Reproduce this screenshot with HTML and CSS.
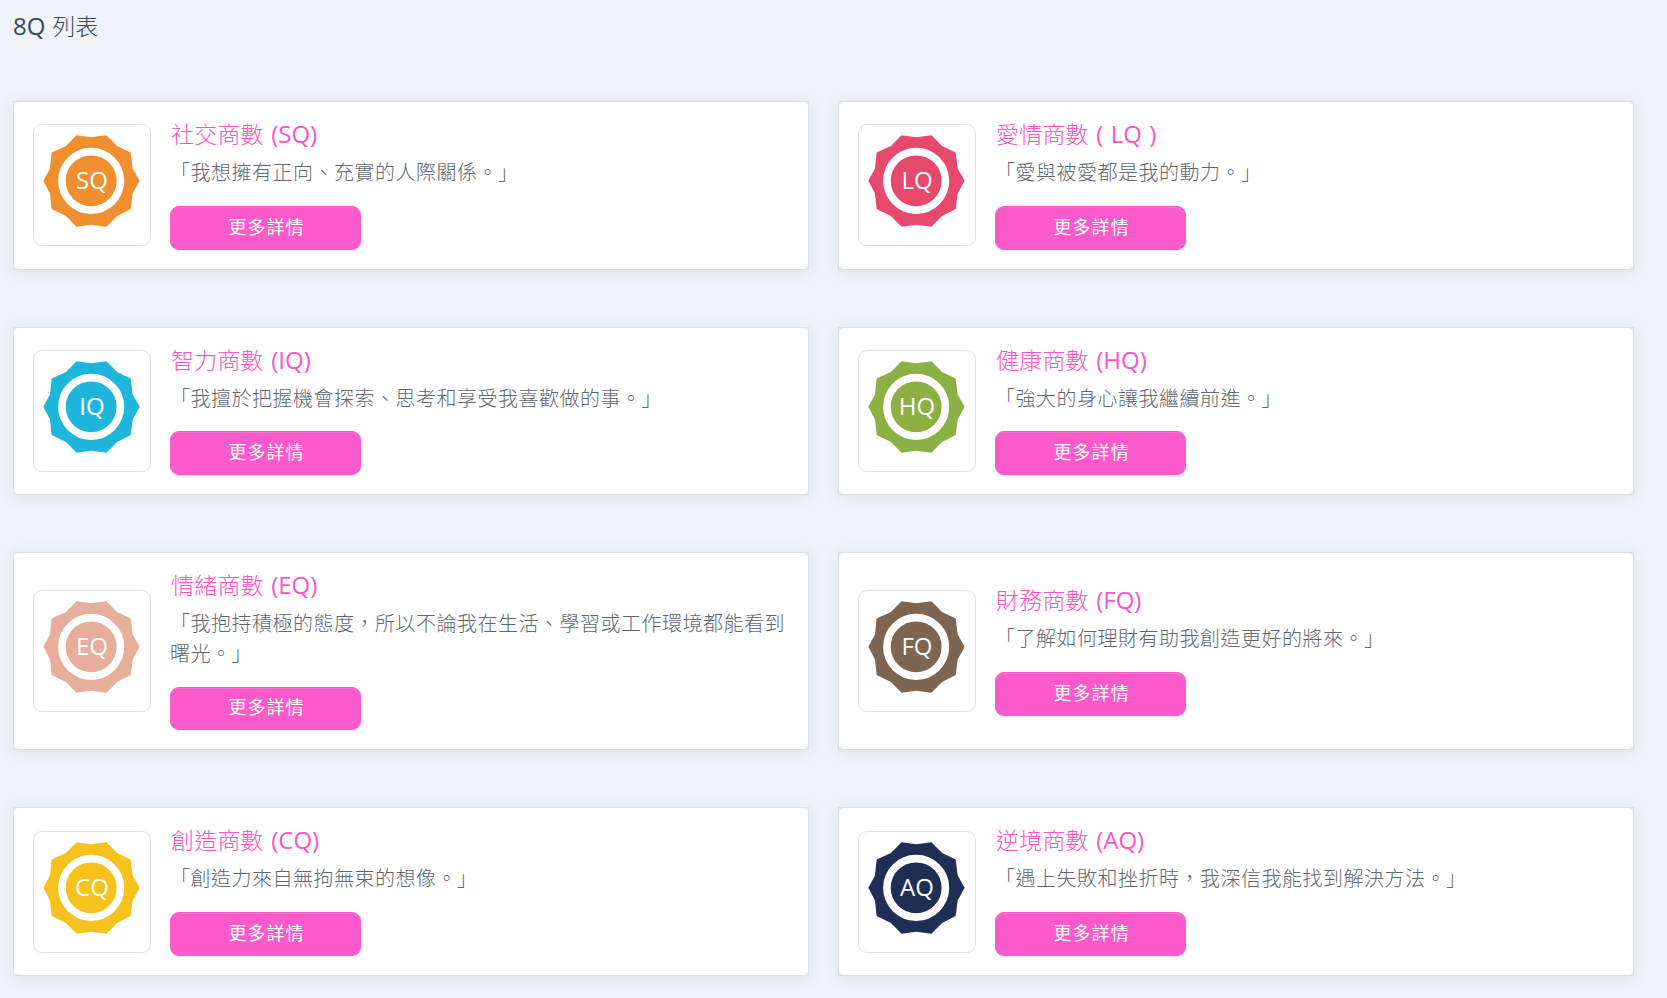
FILE: index.html
```
<!DOCTYPE html>
<html lang="zh-Hant">
<head>
  <meta charset="UTF-8">
  <title>8Q 列表</title>
  <meta name="viewport" content="width=device-width, initial-scale=1.0">
  <link rel="stylesheet" href="styles.css">
</head>
<body>

  <!-- badge shape, reused by every card -->
  <svg class="defs" width="0" height="0">
    <symbol id="badge" viewBox="129 134 292 277">
      <path fill="currentColor" d="M230 135L274 141L320 135L352 167L393 187L399 235L420 272L399 310L393 357L352 378L320 410L274 404L230 410L198 378L155 357L150 310L130 272L150 235L155 187L198 167Z"/>
      <circle cx="274" cy="272" r="88" fill="none" stroke="#fff" stroke-width="23"/>
    </symbol>
  </svg>

  <h1 class="page-title"><span class="latin">8Q</span> 列表</h1>

  <div class="list">

    <div class="card">
      <div class="card-inner">
        <div class="thumb sq"><svg class="badge"><use href="#badge"/></svg><span class="badge-text">SQ</span></div>
        <div class="content">
          <h2 class="title">社交商數 <span class="latin">(SQ)</span></h2>
          <p class="desc">「我想擁有正向、充實的人際關係。」</p>
          <button class="btn">更多詳情</button>
        </div>
      </div>
    </div>

    <div class="card">
      <div class="card-inner">
        <div class="thumb lq"><svg class="badge"><use href="#badge"/></svg><span class="badge-text">LQ</span></div>
        <div class="content">
          <h2 class="title">愛情商數 <span class="latin">( LQ )</span></h2>
          <p class="desc">「愛與被愛都是我的動力。」</p>
          <button class="btn">更多詳情</button>
        </div>
      </div>
    </div>

    <div class="card">
      <div class="card-inner">
        <div class="thumb iq"><svg class="badge"><use href="#badge"/></svg><span class="badge-text">IQ</span></div>
        <div class="content">
          <h2 class="title">智力商數 <span class="latin">(IQ)</span></h2>
          <p class="desc">「我擅於把握機會探索、思考和享受我喜歡做的事。」</p>
          <button class="btn">更多詳情</button>
        </div>
      </div>
    </div>

    <div class="card">
      <div class="card-inner">
        <div class="thumb hq"><svg class="badge"><use href="#badge"/></svg><span class="badge-text">HQ</span></div>
        <div class="content">
          <h2 class="title">健康商數 <span class="latin">(HQ)</span></h2>
          <p class="desc">「強大的身心讓我繼續前進。」</p>
          <button class="btn">更多詳情</button>
        </div>
      </div>
    </div>

    <div class="card">
      <div class="card-inner">
        <div class="thumb eq"><svg class="badge"><use href="#badge"/></svg><span class="badge-text">EQ</span></div>
        <div class="content">
          <h2 class="title">情緒商數 <span class="latin">(EQ)</span></h2>
          <p class="desc">「我抱持積極的態度，所以不論我在生活、學習或工作環境都能看到曙光。」</p>
          <button class="btn">更多詳情</button>
        </div>
      </div>
    </div>

    <div class="card">
      <div class="card-inner">
        <div class="thumb fq"><svg class="badge"><use href="#badge"/></svg><span class="badge-text">FQ</span></div>
        <div class="content">
          <h2 class="title">財務商數 <span class="latin">(FQ)</span></h2>
          <p class="desc">「了解如何理財有助我創造更好的將來。」</p>
          <button class="btn">更多詳情</button>
        </div>
      </div>
    </div>

    <div class="card">
      <div class="card-inner">
        <div class="thumb cq"><svg class="badge"><use href="#badge"/></svg><span class="badge-text">CQ</span></div>
        <div class="content">
          <h2 class="title">創造商數 <span class="latin">(CQ)</span></h2>
          <p class="desc">「創造力來自無拘無束的想像。」</p>
          <button class="btn">更多詳情</button>
        </div>
      </div>
    </div>

    <div class="card">
      <div class="card-inner">
        <div class="thumb aq"><svg class="badge"><use href="#badge"/></svg><span class="badge-text">AQ</span></div>
        <div class="content">
          <h2 class="title">逆境商數 <span class="latin">(AQ)</span></h2>
          <p class="desc">「遇上失敗和挫折時，我深信我能找到解決方法。」</p>
          <button class="btn">更多詳情</button>
        </div>
      </div>
    </div>

  </div>

</body>
</html>
```
FILE: styles.css
```
* {
  box-sizing: border-box;
}

body {
  margin: 0;
  min-height: 100vh;
  padding: 13px 33px 0 13px;
  background-color: #f0f4f9;
  font-family: "Open Sans", "Noto Sans CJK TC", sans-serif;
  font-weight: 300;
  text-spacing-trim: space-all;
}

.defs {
  position: absolute;
}

h1, h2, p {
  margin: 0;
  font-weight: 300;
}

.latin {
  font-size: 24px;
  font-weight: 400;
  letter-spacing: 0;
}

.page-title {
  height: 88px;
  font-size: 23px;
  line-height: 25px;
  word-spacing: 1px;
  color: #34495e;
}

.list {
  display: grid;
  grid-template-columns: 1fr 1fr;
  gap: 57px 29px;
}

.card {
  display: flex;
  background-color: #e9ecf1;
  border: 1px solid #dce1e7;
  box-shadow: 0 2px 14px rgba(60, 75, 90, 0.11);
}

.card-inner {
  display: flex;
  flex: 1;
  align-items: center;
  gap: 19px;
  padding: 19px;
  border-radius: 5px;
  background-color: #fff;
}

.thumb {
  position: relative;
  flex: none;
  width: 118px;
  height: 122px;
  padding: 10px 9px;
  border: 1px solid #dee2e6;
  border-radius: 9px;
}

.badge {
  display: block;
  width: 97px;
  height: 92px;
}

.badge-text {
  position: absolute;
  top: 39px;
  left: 0;
  width: 116px;
  font-size: 24px;
  line-height: 32px;
  font-weight: 400;
  text-align: center;
  color: #fff;
}

.content {
  flex: 1;
}

.title {
  padding-left: 1px;
  font-size: 23px;
  line-height: 26px;
  letter-spacing: 0.2px;
  word-spacing: 1.2px;
  color: #fb55c9;
}

.desc {
  margin: 11px 0 18.2px;
  font-size: 20px;
  line-height: 29.6px;
  letter-spacing: 0.5px;
  color: #5f6871;
}

.btn {
  display: block;
  width: 191px;
  height: 43.8px;
  padding: 0 9px 4px 11px;
  border: 1px solid #fa5acb;
  border-radius: 9px;
  background-color: #fa5acb;
  box-shadow: inset 0 1px 0 rgba(255, 255, 255, 0.15), 0 1px 1px rgba(0, 0, 0, 0.075);
  font-family: inherit;
  font-size: 18px;
  font-weight: 400;
  letter-spacing: 1px;
  color: #fff;
}

.sq { color: #f18e2e; }
.lq { color: #e6496b; }
.iq { color: #1fb6de; }
.hq { color: #8cb043; }
.eq { color: #e7ae9b; }
.fq { color: #7d6552; }
.cq { color: #f7c21c; }
.aq { color: #202d55; }
```
